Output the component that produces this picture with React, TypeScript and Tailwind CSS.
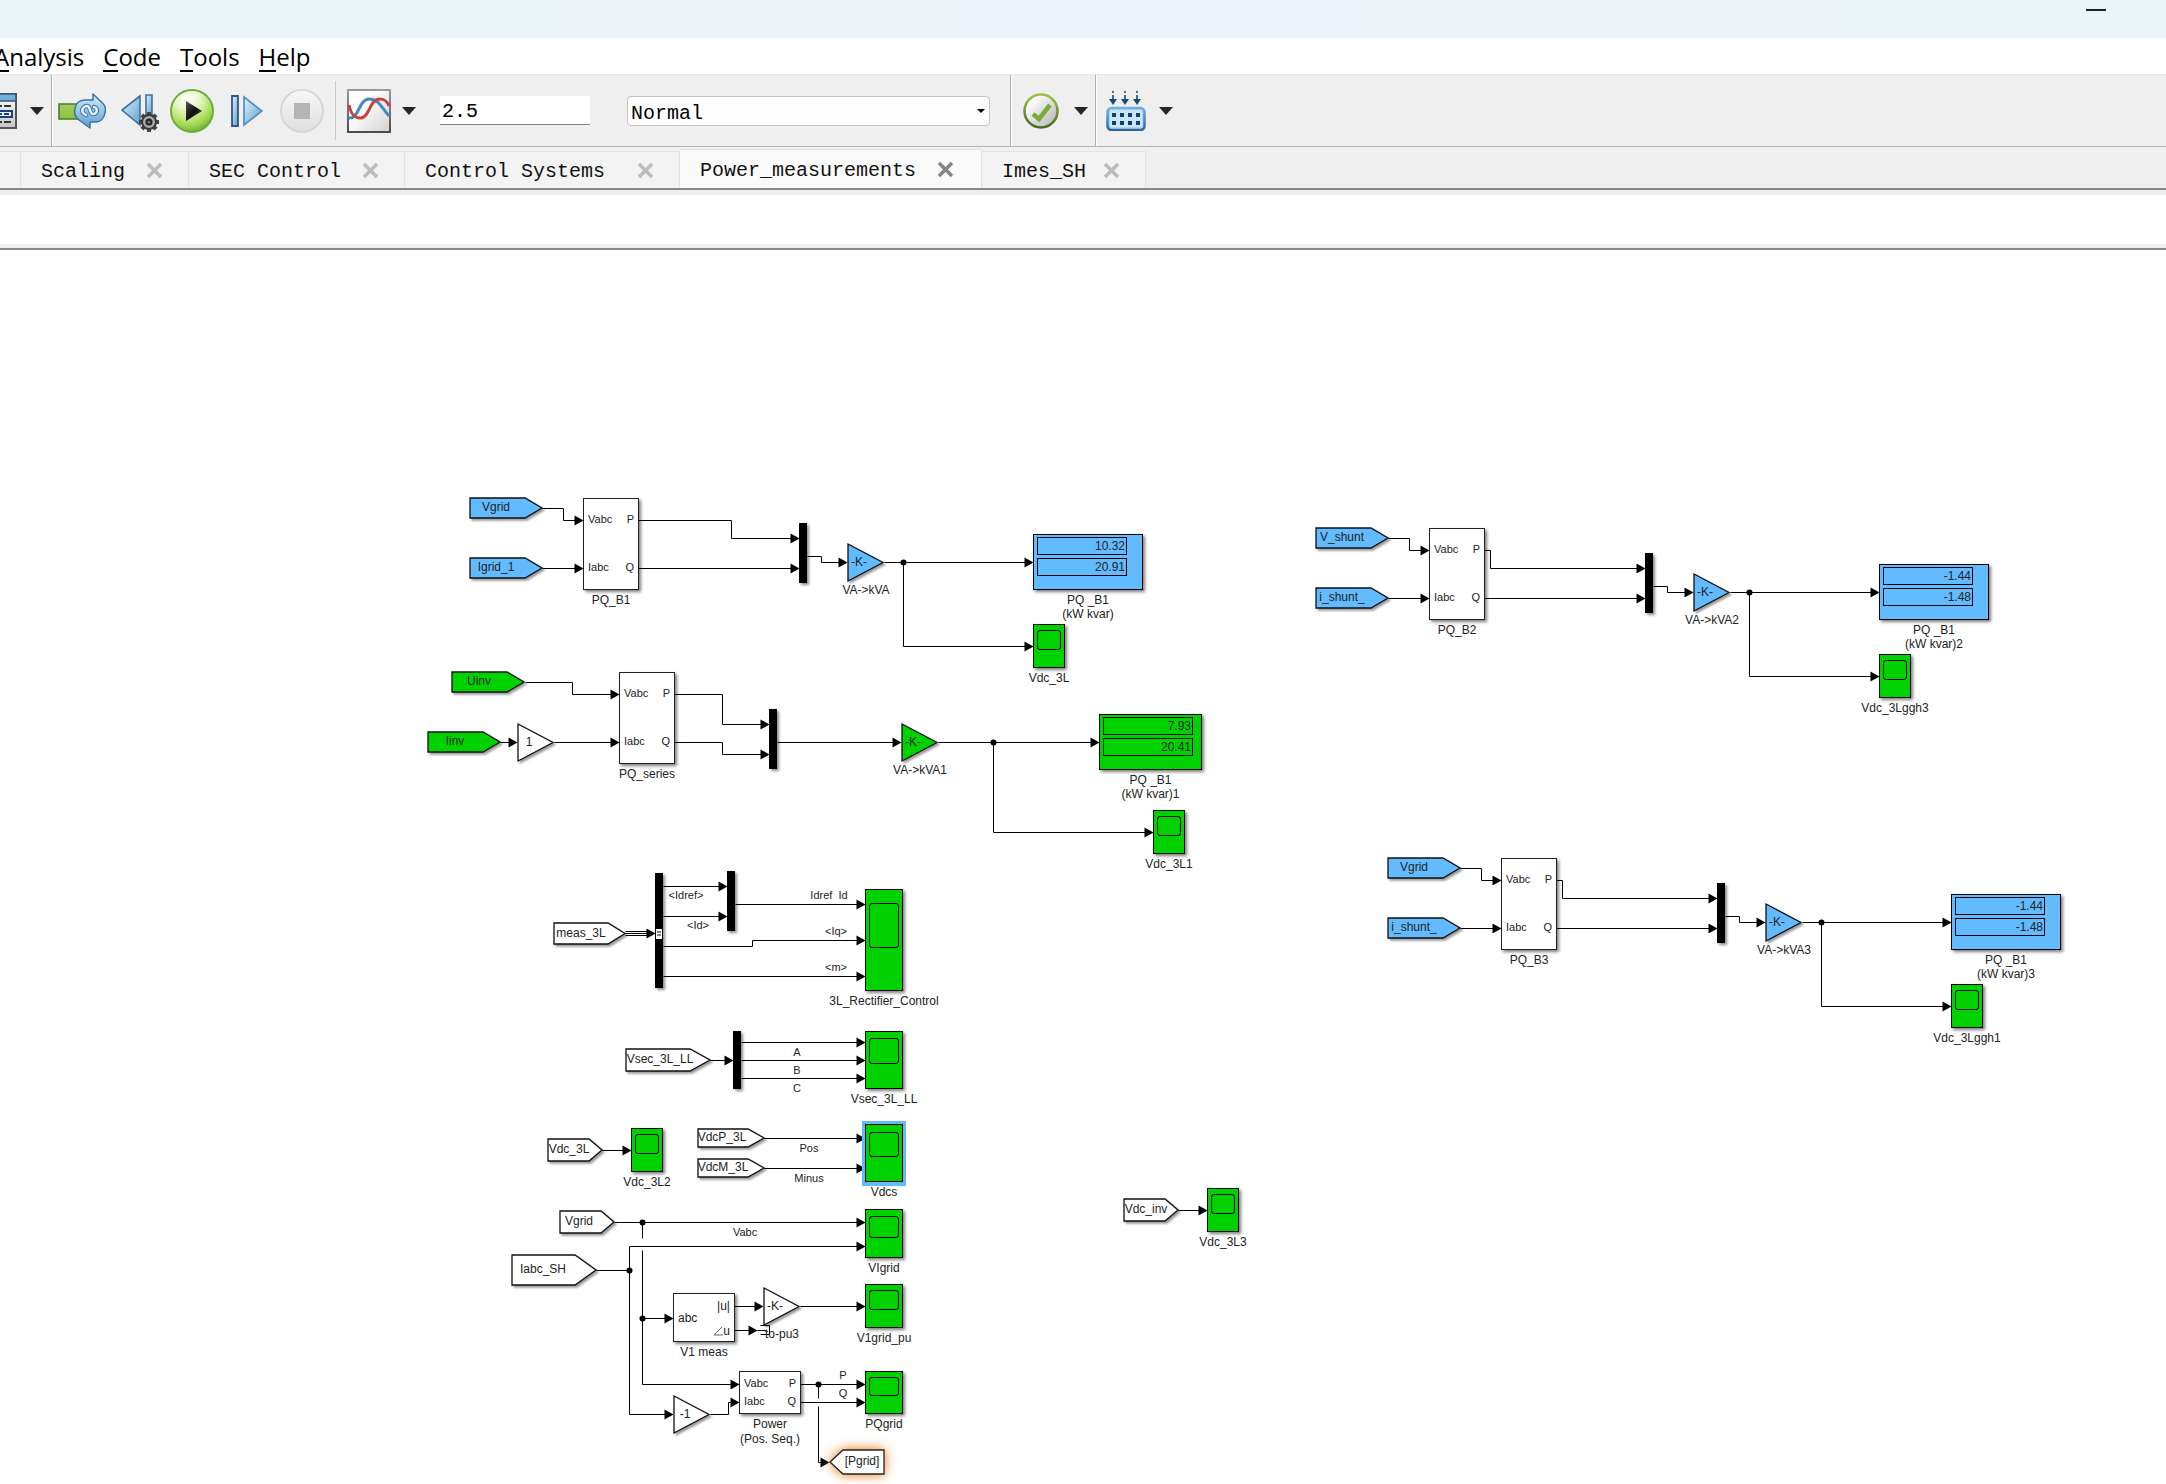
import React from "react";

/* ------------------------------------------------------------------ */
/* Diagram primitives. Coordinates are those of the model canvas.      */
/* ------------------------------------------------------------------ */

const CANVAS_TOP = 250;
const place = (x: number, y: number) => ({ left: x, top: y - CANVAS_TOP });

const BLUE = "#62bbff";
const GREEN = "#00d200";

type LabelProps = { x: number; y: number; children: React.ReactNode; small?: boolean };

function Label({ x, y, children, small }: LabelProps) {
  return (
    <div
      className={`absolute flex h-0 w-0 items-center justify-center whitespace-pre text-[#222] ${small ? "text-[11px]" : "text-[12px]"}`}
      style={place(x, y)}
    >
      <span>{children}</span>
    </div>
  );
}

type TagProps = {
  x: number;
  y: number;
  w: number;
  h: number;
  tip: number;
  text: string;
  tx: number;
  fill?: string;
};

function Tag({ x, y, w, h, tip, text, tx, fill = "#fff" }: TagProps) {
  return (
    <>
      <svg
        className="absolute overflow-visible drop-shadow-[2px_2px_1px_rgba(0,0,0,0.4)]"
        style={place(x, y)}
        width={w}
        height={h}
      >
        <path
          d={`M1 0H${w - tip}L${w} ${h / 2}L${w - tip} ${h}H1Z`}
          fill={fill}
          stroke="#111"
          strokeWidth="1.3"
        />
      </svg>
      <Label x={tx} y={y + h / 2 - 1}>
        {text}
      </Label>
    </>
  );
}

type GainProps = { x: number; y: number; text: string; fill?: string };

/* Triangle whose input side is at x and whose axis is at y. */
function Gain({ x, y, text, fill = "#fff" }: GainProps) {
  return (
    <>
      <svg
        className="absolute overflow-visible drop-shadow-[2px_2px_1px_rgba(0,0,0,0.4)]"
        style={place(x, y - 18)}
        width="37"
        height="37"
      >
        <path d="M1 0L36 18.5L1 37Z" fill={fill} stroke="#111" strokeWidth="1.3" />
      </svg>
      <Label x={x + 12} y={y}>
        {text}
      </Label>
    </>
  );
}

function Mux({ x, y, h }: { x: number; y: number; h: number }) {
  return (
    <div
      className="absolute w-2 bg-black shadow-[2px_2px_3px_rgba(0,0,0,0.45)]"
      style={{ ...place(x, y), height: h }}
    />
  );
}

type ScopeProps = {
  x: number;
  y: number;
  w?: number;
  h?: number;
  inset?: number;
  screen?: number;
  label: string;
  selected?: boolean;
};

function Scope({ x, y, w = 32, h = 44, inset = 5, screen = 20, label, selected }: ScopeProps) {
  return (
    <>
      <div
        className={`absolute flex justify-center border border-black bg-[#00d200] ${
          selected
            ? "shadow-[0_0_0_3px_#62bbff,0_1px_0_3px_#62bbff]"
            : "shadow-[2px_2px_3px_rgba(0,0,0,0.5)]"
        }`}
        style={{ ...place(x, y), width: w, height: h, paddingTop: inset }}
      >
        <div
          className="rounded-[3px] border border-black outline-1 -outline-offset-1 outline-black/40"
          style={{ width: w - 8, height: screen }}
        />
      </div>
      <Label x={x + w / 2} y={y + h + 10}>
        {label}
      </Label>
    </>
  );
}

type DisplayProps = { x: number; y: number; w: number; values: string[]; fill: string; suffix: string };

function Display({ x, y, w, values, fill, suffix }: DisplayProps) {
  return (
    <>
      <div
        className="absolute flex h-14 flex-col gap-[3px] border border-black pt-[2px] pl-[3px] shadow-[2px_2px_3px_rgba(0,0,0,0.5)]"
        style={{ ...place(x, y), width: w, background: fill }}
      >
        {values.map((v) => (
          <div
            key={v}
            className="flex h-[18px] w-[90px] items-center justify-end border border-black pr-px pb-px text-[12px] leading-none text-[#222]"
          >
            {v}
          </div>
        ))}
      </div>
      <Label x={x + w / 2} y={y + 66}>
        PQ _B1
      </Label>
      <Label x={x + w / 2} y={y + 80}>
        {`(kW kvar)${suffix}`}
      </Label>
    </>
  );
}

type BlockProps = {
  x: number;
  y: number;
  w: number;
  h: number;
  children?: React.ReactNode;
};

function Block({ x, y, w, h, children }: BlockProps) {
  return (
    <div
      className="absolute flex justify-between border border-[#222] bg-white px-1 text-[11px] leading-none text-[#222] shadow-[2px_2px_3px_rgba(0,0,0,0.5)]"
      style={{ ...place(x, y), width: w, height: h }}
    >
      {children}
    </div>
  );
}

function PQBlock({ x, y, label }: { x: number; y: number; label: string }) {
  return (
    <>
      <Block x={x} y={y} w={56} h={92}>
        <div className="flex flex-col justify-between pt-[15px] pb-4">
          <span>Vabc</span>
          <span>Iabc</span>
        </div>
        <div className="flex flex-col items-end justify-between pt-[15px] pb-4">
          <span>P</span>
          <span>Q</span>
        </div>
      </Block>
      <Label x={x + 28} y={y + 102}>
        {label}
      </Label>
    </>
  );
}

/* ------------------------------------------------------------------ */
/* Signals                                                             */
/* ------------------------------------------------------------------ */

type Wire = { d: string; to?: [number, number] };

function Wires({ wires, dots = [] }: { wires: Wire[]; dots?: [number, number][] }) {
  return (
    <>
      {wires.map((w) => (
        <g key={w.d}>
          <path d={w.d} fill="none" stroke="#000" strokeWidth="1" />
          {w.to && <path d={`M${w.to[0]} ${w.to[1]}l-9 -5v10z`} fill="#000" />}
        </g>
      ))}
      {dots.map(([x, y]) => (
        <circle key={`${x}-${y}`} cx={x} cy={y} r="3" fill="#000" />
      ))}
    </>
  );
}

const wires: Wire[] = [
  // inverter power
  { d: "M525 682H572V694H617", to: [619, 694] },
  { d: "M500 742H515", to: [517, 742] },
  { d: "M554 742H617", to: [619, 742] },
  { d: "M674 694H722V724H767", to: [769, 724] },
  { d: "M674 742H722V754H767", to: [769, 754] },
  { d: "M777 742H899", to: [901, 742] },
  { d: "M938 742H1097", to: [1099, 742] },
  { d: "M993 742V832H1151", to: [1153, 832] },
  // rectifier control
  { d: "M625 931H648M625 933H653M625 935H648", to: [655, 933] },
  { d: "M663 886H725", to: [727, 886] },
  { d: "M663 916H725", to: [727, 916] },
  { d: "M735 904H863", to: [865, 904] },
  { d: "M663 946H752V940H863", to: [865, 940] },
  { d: "M663 976H863", to: [865, 976] },
  // secondary voltages
  { d: "M710 1060H731", to: [733, 1060] },
  { d: "M741 1042H863", to: [865, 1042] },
  { d: "M741 1060H863", to: [865, 1060] },
  { d: "M741 1078H863", to: [865, 1078] },
  // dc link
  { d: "M602 1150H629", to: [631, 1150] },
  { d: "M764 1138H863", to: [865, 1138] },
  { d: "M764 1168H863", to: [865, 1168] },
  { d: "M1178 1210H1205", to: [1207, 1210] },
  // grid measurements
  { d: "M614 1222H863", to: [865, 1222] },
  { d: "M596 1270H629V1246H863", to: [865, 1246] },
  { d: "M629 1270V1414H671", to: [673, 1414] },
  { d: "M642 1222V1238" },
  { d: "M642 1250V1384H737", to: [739, 1384] },
  { d: "M642 1318H671", to: [673, 1318] },
  { d: "M734 1306H761", to: [763, 1306] },
  { d: "M734 1330H755", to: [757, 1330] },
  { d: "M757 1330H766M760 1325H769V1334H760" },
  { d: "M800 1306H863", to: [865, 1306] },
  { d: "M710 1414H728V1402H737", to: [739, 1402] },
  { d: "M800 1384H863", to: [865, 1384] },
  { d: "M800 1402H863", to: [865, 1402] },
  { d: "M818 1384V1398" },
  { d: "M818 1406V1462H827", to: [829, 1462] },
];

const dots: [number, number][] = [
  [993, 742],
  [642, 1222],
  [629, 1270],
  [642, 1318],
  [818, 1384],
];

type Chain = {
  dx: number;
  dy: number;
  inputs: [string, string];
  block: string;
  gain: string;
  values: string[];
  suffix: string;
  scope: string;
  bend: number;
};

const chains: Chain[] = [
  { dx: 0, dy: 0, inputs: ["Vgrid", "Igrid_1"], block: "PQ_B1", gain: "VA->kVA", values: ["10.32", "20.91"], suffix: "", scope: "Vdc_3L", bend: 731 },
  { dx: 846, dy: 30, inputs: ["V_shunt", "i_shunt_"], block: "PQ_B2", gain: "VA->kVA2", values: ["-1.44", "-1.48"], suffix: "2", scope: "Vdc_3Lggh3", bend: 644 },
  { dx: 918, dy: 360, inputs: ["Vgrid", "i_shunt_"], block: "PQ_B3", gain: "VA->kVA3", values: ["-1.44", "-1.48"], suffix: "3", scope: "Vdc_3Lggh1", bend: 644 },
];

function ChainWires({ dx, dy, bend }: Chain) {
  return (
    <g transform={`translate(${dx} ${dy})`}>
      <Wires
        wires={[
          { d: "M542 508H563V520H581", to: [583, 520] },
          { d: "M542 568H581", to: [583, 568] },
          { d: `M638 520H${bend}V538H797`, to: [799, 538] },
          { d: "M638 568H797", to: [799, 568] },
          { d: "M807 556H821V562H845", to: [847, 562] },
          { d: "M884 562H1031", to: [1033, 562] },
          { d: "M903 562V646H1031", to: [1033, 646] },
        ]}
        dots={[[903, 562]]}
      />
    </g>
  );
}

function ChainBlocks({ dx, dy, inputs, block, gain, values, suffix, scope }: Chain) {
  return (
    <>
      <Tag x={dx + 469} y={dy + 498} w={73} h={20} tip={17} text={inputs[0]} tx={dx + 496} fill={BLUE} />
      <Tag x={dx + 469} y={dy + 558} w={73} h={20} tip={17} text={inputs[1]} tx={dx + 496} fill={BLUE} />
      <PQBlock x={dx + 583} y={dy + 498} label={block} />
      <Mux x={dx + 799} y={dy + 523} h={60} />
      <Gain x={dx + 847} y={dy + 562} text="-K-" fill={BLUE} />
      <Label x={dx + 866} y={dy + 590}>
        {gain}
      </Label>
      <Display x={dx + 1033} y={dy + 534} w={110} values={values} fill={BLUE} suffix={suffix} />
      <Scope x={dx + 1033} y={dy + 624} label={scope} />
    </>
  );
}

function Canvas() {
  return (
    <main className="relative flex-1 overflow-hidden bg-white font-['Liberation_Sans',Arial,sans-serif] leading-none">
      <svg className="absolute inset-0 h-full w-full" aria-hidden="true">
        <g transform={`translate(0.5 ${0.5 - CANVAS_TOP})`}>
          <Wires wires={wires} dots={dots} />
          {chains.map((c) => (
            <ChainWires key={c.block} {...c} />
          ))}
        </g>
      </svg>

      {chains.map((c) => (
        <ChainBlocks key={c.block} {...c} />
      ))}

      <Tag x={451} y={672} w={73} h={20} tip={17} text="Uinv" tx={479} fill={GREEN} />
      <Tag x={427} y={732} w={73} h={20} tip={17} text="Iinv" tx={455} fill={GREEN} />
      <Gain x={517} y={742} text="1" />
      <PQBlock x={619} y={672} label="PQ_series" />
      <Mux x={769} y={709} h={60} />
      <Gain x={901} y={742} text="-K-" fill={GREEN} />
      <Label x={920} y={770}>VA-&gt;kVA1</Label>
      <Display x={1099} y={714} w={103} values={["7.93", "20.41"]} fill={GREEN} suffix="1" />
      <Scope x={1153} y={810} label="Vdc_3L1" />

      <Tag x={553} y={923} w={72} h={21} tip={17} text="meas_3L" tx={581} />
      <Mux x={655} y={873} h={115} />
      <svg className="absolute" style={place(656, 929)} width="6" height="10" aria-hidden="true">
        <path d="M0 0H6V10H0Z" fill="#fff" />
        <path d="M1 3H5M1 6H5" stroke="#000" strokeWidth="1" />
      </svg>
      <Mux x={727} y={871} h={60} />
      <Label x={686} y={895} small>&lt;Idref&gt;</Label>
      <Label x={698} y={925} small>&lt;Id&gt;</Label>
      <Label x={829} y={895} small>{"Idref  Id"}</Label>
      <Label x={836} y={931} small>&lt;Iq&gt;</Label>
      <Label x={836} y={967} small>&lt;m&gt;</Label>
      <Scope x={865} y={889} w={38} h={102} inset={13} screen={45} label="3L_Rectifier_Control" />

      <Tag x={625} y={1049} w={85} h={22} tip={20} text="Vsec_3L_LL" tx={660} />
      <Mux x={733} y={1031} h={58} />
      <Label x={797} y={1052} small>A</Label>
      <Label x={797} y={1070} small>B</Label>
      <Label x={797} y={1088} small>C</Label>
      <Scope x={865} y={1031} w={38} h={58} inset={6} screen={26} label="Vsec_3L_LL" />

      <Tag x={547} y={1139} w={55} h={22} tip={13} text="Vdc_3L" tx={569} />
      <Scope x={631} y={1128} label="Vdc_3L2" />
      <Tag x={697} y={1129} w={67} h={18} tip={16} text="VdcP_3L" tx={722} />
      <Tag x={697} y={1159} w={67} h={18} tip={16} text="VdcM_3L" tx={723} />
      <Label x={809} y={1148} small>Pos</Label>
      <Label x={809} y={1178} small>Minus</Label>
      <Scope x={865} y={1124} w={38} h={58} inset={7} screen={25} label="Vdcs" selected />

      <Tag x={1123} y={1199} w={55} h={22} tip={13} text="Vdc_inv" tx={1146} />
      <Scope x={1207} y={1188} label="Vdc_3L3" />

      <Tag x={559} y={1211} w={55} h={22} tip={13} text="Vgrid" tx={579} />
      <Label x={745} y={1232} small>Vabc</Label>
      <Scope x={865} y={1209} w={38} h={49} inset={6} screen={22} label="VIgrid" />

      <Tag x={511} y={1255} w={85} h={30} tip={21} text="Iabc_SH" tx={543} />
      <Block x={673} y={1293} w={62} h={49}>
        <span className="self-center text-[12px]">abc</span>
        <span className="flex flex-col items-end justify-between pt-[6px] pb-1 text-[12px]">
          <span>|u|</span>
          <span className="flex items-end">
            <svg className="h-[11px] w-[10px]" viewBox="0 0 10 11" aria-hidden="true">
              <path d="M9 1L1 9H10" fill="none" stroke="#666" strokeWidth="1" />
            </svg>
            u
          </span>
        </span>
      </Block>
      <Label x={704} y={1352}>V1 meas</Label>
      <Gain x={763} y={1306} text="-K-" />
      <Label x={782} y={1334}>to-pu3</Label>
      <Scope x={865} y={1284} w={38} h={44} inset={5} screen={20} label="V1grid_pu" />

      <Gain x={673} y={1414} text="-1" />
      <Block x={739} y={1371} w={62} h={43}>
        <span className="flex flex-col justify-between py-[6px]">
          <span>Vabc</span>
          <span>Iabc</span>
        </span>
        <span className="flex flex-col items-end justify-between py-[6px]">
          <span>P</span>
          <span>Q</span>
        </span>
      </Block>
      <Label x={770} y={1424}>Power</Label>
      <Label x={770} y={1439}>(Pos. Seq.)</Label>
      <Label x={843} y={1375} small>P</Label>
      <Label x={843} y={1393} small>Q</Label>
      <Scope x={865} y={1371} w={38} h={43} inset={5} screen={19} label="PQgrid" />

      <svg
        className="absolute overflow-visible drop-shadow-[0_0_6px_#e8750a]"
        style={place(830, 1450)}
        width="55"
        height="25"
      >
        <path d="M0 12L13 0H54V24H13Z" fill="#fff" stroke="#222" strokeWidth="1.3" />
      </svg>
      <Label x={862} y={1461}>[Pgrid]</Label>
    </main>
  );
}

/* ------------------------------------------------------------------ */
/* Toolbar icons                                                       */
/* ------------------------------------------------------------------ */

function Caret() {
  return (
    <svg className="h-2 w-[14px]" viewBox="0 0 14 8" aria-hidden="true">
      <path d="M0 0H14L7 8Z" fill="#262626" />
    </svg>
  );
}

function ExplorerIcon() {
  return (
    <svg className="h-9 w-[17px]" viewBox="0 0 17 36" aria-hidden="true">
      <defs>
        <linearGradient id="exBody" x1="0" y1="0" x2="0" y2="1">
          <stop offset="0" stopColor="#fff" />
          <stop offset="1" stopColor="#c4c4c4" />
        </linearGradient>
      </defs>
      <path d="M-8 1H16V35H-8Z" fill="url(#exBody)" stroke="#555" strokeWidth="2" />
      <path d="M-8 1H16V8H-8Z" fill="#6fb0dc" stroke="#35577c" strokeWidth="1.6" />
      <path d="M-2 13H2M4 13H11M-2 29H2M4 29H11" stroke="#333" strokeWidth="2" />
      <path d="M-2 18H12V24H-2Z" fill="#e8f2fb" stroke="#1d3f77" strokeWidth="2" />
      <path d="M-1 21H2M4 21H9" stroke="#1d3f77" strokeWidth="2" />
    </svg>
  );
}

function FastRestartIcon() {
  return (
    <svg className="h-9 w-12" viewBox="0 0 48 36" aria-hidden="true">
      <defs>
        <linearGradient id="frGreen" x1="0" y1="0" x2="0" y2="1">
          <stop offset="0" stopColor="#a6cf5c" />
          <stop offset="1" stopColor="#8ac43f" />
        </linearGradient>
        <linearGradient id="frBlue" x1="0" y1="0" x2="0" y2="1">
          <stop offset="0" stopColor="#d3ebfa" />
          <stop offset="1" stopColor="#5f9fd2" />
        </linearGradient>
      </defs>
      <path d="M1 11H20V26H1Z" fill="url(#frGreen)" stroke="#4c7a2b" strokeWidth="1.6" />
      <path
        d="M35 1L44 9.500C47 12 48 16 47 20C46 26 42 29 38 29H32V35L21 27C17 24 16 19 17 15C18 10 22 7 27 7H35Z"
        fill="url(#frBlue)"
        stroke="#41719f"
        strokeWidth="1.5"
        strokeLinejoin="round"
      />
      <path
        d="M25 20C23 16 26 13 29 13C33 13 31 21 35 21C38 21 40 18 38 15M25 20L28 22M38 15L36 14"
        fill="none"
        stroke="#41719f"
        strokeWidth="4.5"
        strokeLinecap="round"
      />
      <path
        d="M25 20C23 16 26 13 29 13C33 13 31 21 35 21C38 21 40 18 38 15M25 20L28 22M38 15L36 14"
        fill="none"
        stroke="#e4f3fd"
        strokeWidth="2.5"
        strokeLinecap="round"
      />
    </svg>
  );
}

function StepBackIcon() {
  const teeth = [0, 45, 90, 135, 180, 225, 270, 315];
  return (
    <svg className="h-10 w-[38px]" viewBox="0 0 38 40" aria-hidden="true">
      <defs>
        <linearGradient id="stepBlue" x1="0" y1="0" x2="1" y2="1">
          <stop offset="0" stopColor="#dff3fd" />
          <stop offset="1" stopColor="#5d9fd0" />
        </linearGradient>
      </defs>
      <path d="M19 3V32L1 17Z" fill="url(#stepBlue)" stroke="#44709c" strokeWidth="1.6" />
      <path d="M25 2H31V22H25Z" fill="url(#stepBlue)" stroke="#44709c" strokeWidth="1.6" />
      <g transform="translate(28 29)">
        {teeth.map((a) => (
          <path key={a} d="M-2 -10H2V-6H-2Z" transform={`rotate(${a})`} fill="#444" />
        ))}
        <circle r="7" fill="#aaa" stroke="#3a3a3a" strokeWidth="2" />
        <circle r="3.5" fill="#222" />
        <circle cx="0" cy="0" r="1.5" fill="#777" />
      </g>
    </svg>
  );
}

function RunIcon() {
  return (
    <svg className="h-11 w-11" viewBox="0 0 44 44" aria-hidden="true">
      <defs>
        <radialGradient id="runFill" cx="0.4" cy="0.2" r="0.85">
          <stop offset="0" stopColor="#ffffff" />
          <stop offset="0.35" stopColor="#e6f6c4" />
          <stop offset="0.75" stopColor="#a3d84c" />
          <stop offset="1" stopColor="#5fa636" />
        </radialGradient>
        <linearGradient id="runArrow" x1="0" y1="0" x2="1" y2="1">
          <stop offset="0" stopColor="#555" />
          <stop offset="0.5" stopColor="#111" />
          <stop offset="1" stopColor="#444" />
        </linearGradient>
      </defs>
      <circle cx="22" cy="22" r="21" fill="url(#runFill)" stroke="#6cae3e" strokeWidth="2" />
      <path d="M16 12L32 22L16 32Z" fill="url(#runArrow)" />
    </svg>
  );
}

function StepForwardIcon() {
  return (
    <svg className="h-8 w-8" viewBox="0 0 32 32" aria-hidden="true">
      <path d="M1 1H7V31H1Z" fill="url(#stepBlue)" stroke="#2f5680" strokeWidth="1.8" />
      <path d="M13 2L31 16L13 30Z" fill="url(#stepBlue)" stroke="#5b8fbc" strokeWidth="1.8" />
    </svg>
  );
}

function StopIcon() {
  return (
    <svg className="h-11 w-11" viewBox="0 0 44 44" aria-hidden="true">
      <defs>
        <linearGradient id="stopFill" x1="0" y1="0" x2="0" y2="1">
          <stop offset="0" stopColor="#f8f8f8" />
          <stop offset="1" stopColor="#dedede" />
        </linearGradient>
      </defs>
      <circle cx="22" cy="22" r="21" fill="url(#stopFill)" stroke="#d2d2d2" strokeWidth="1.5" />
      <path d="M14 14H30V30H14Z" fill="#b4b4b4" />
    </svg>
  );
}

function PlotIcon() {
  return (
    <svg className="h-11 w-11" viewBox="0 0 44 44" aria-hidden="true">
      <defs>
        <linearGradient id="plotBg" x1="0.3" y1="0.4" x2="1" y2="1">
          <stop offset="0" stopColor="#fff" />
          <stop offset="1" stopColor="#d2d2d2" />
        </linearGradient>
        <linearGradient id="plotEdge" x1="0" y1="0" x2="0" y2="1">
          <stop offset="0" stopColor="#9a9a9a" />
          <stop offset="1" stopColor="#4c4c4c" />
        </linearGradient>
      </defs>
      <path d="M1 1H43V43H1Z" fill="url(#plotBg)" stroke="url(#plotEdge)" strokeWidth="2" />
      <path d="M2 29C12 30 12 10 22 10C32 10 34 18 42 27" fill="none" stroke="#4488c4" strokeWidth="3" />
      <path d="M2 16C4 25 7 29 13 29C23 29 22 10 33 10C38 10 41 14 42 17" fill="none" stroke="#c8423f" strokeWidth="3" />
    </svg>
  );
}

function CheckIcon() {
  return (
    <svg className="h-9 w-9" viewBox="0 0 36 36" aria-hidden="true">
      <defs>
        <linearGradient id="ckBg" x1="0.2" y1="0.2" x2="0.9" y2="0.9">
          <stop offset="0" stopColor="#fff" />
          <stop offset="1" stopColor="#b9b9b9" />
        </linearGradient>
        <linearGradient id="ckEdge" x1="0" y1="0" x2="0" y2="1">
          <stop offset="0" stopColor="#98c343" />
          <stop offset="1" stopColor="#4b6a26" />
        </linearGradient>
      </defs>
      <circle cx="18" cy="18" r="16.5" fill="url(#ckBg)" stroke="url(#ckEdge)" strokeWidth="2.5" />
      <path d="M10 21L16 26L27 12" fill="none" stroke="#7aac35" strokeWidth="4.5" />
    </svg>
  );
}

function BuildIcon() {
  return (
    <svg className="h-[41px] w-10" viewBox="0 0 40 41" aria-hidden="true">
      <defs>
        <linearGradient id="bdEdge" x1="0" y1="0" x2="0" y2="1">
          <stop offset="0" stopColor="#74aedd" />
          <stop offset="1" stopColor="#2f6397" />
        </linearGradient>
      </defs>
      {[7, 19, 31].map((x) => (
        <g key={x}>
          <path d={`M${x - 1} 1h2v2h-2zM${x - 1} 5h2v5h-2z`} fill="#3a6d9c" />
          <path d={`M${x - 4} 9h8l-4 6z`} fill="#144a7c" />
        </g>
      ))}
      <rect x="1.5" y="18" width="37" height="22" rx="4" fill="#a9d4f5" stroke="url(#bdEdge)" strokeWidth="2.5" />
      <rect x="4" y="20" width="32" height="17" rx="2" fill="#c9e6fb" />
      {[25, 33].map((y) =>
        [8, 16, 24, 32].map((x) => (
          <rect key={`${x}-${y}`} x={x - 2} y={y - 2} width="4" height="4" fill="#123f6e" />
        )),
      )}
    </svg>
  );
}

/* ------------------------------------------------------------------ */
/* Window chrome                                                       */
/* ------------------------------------------------------------------ */

const menus = ["Analysis", "Code", "Tools", "Help"];

function MenuBar() {
  return (
    <nav className="-ml-[6px] flex h-9 items-center gap-[19px] bg-white pt-[2px] font-['Open_Sans','Noto_Sans',sans-serif] text-[24px] text-black">
      {menus.map((m) => (
        <button key={m} type="button" className="leading-8">
          <span className="inline-block border-b-2 border-black leading-[26px]">{m[0]}</span>
          {m.slice(1)}
        </button>
      ))}
    </nav>
  );
}

function Toolbar() {
  return (
    <div className="flex h-[73px] items-stretch border-t border-b border-t-[#e8e8e8] border-b-[#b4b6b6] bg-[#efefef]">
      <div className="flex items-center border-r border-[#b0b0b0] pr-[7px]">
        <button type="button" aria-label="Model explorer"><ExplorerIcon /></button>
        <button type="button" aria-label="Explorer options" className="ml-[13px]"><Caret /></button>
      </div>
      <div className="flex items-center border-l border-white pr-[11px] pl-[5px]">
        <button type="button" aria-label="Fast restart"><FastRestartIcon /></button>
        <button type="button" aria-label="Step back" className="ml-[15px] pt-1"><StepBackIcon /></button>
        <button type="button" aria-label="Run" className="ml-[11px]"><RunIcon /></button>
        <button type="button" aria-label="Step forward" className="ml-[17px]"><StepForwardIcon /></button>
        <button type="button" aria-label="Stop" disabled className="ml-[17px]"><StopIcon /></button>
      </div>
      <div className="my-[6px] w-px bg-[#c8c8c8]" />
      <div className="flex items-center border-r border-[#b0b0b0] pr-5 pl-[11px] font-['Liberation_Mono',monospace] text-[20px] text-black">
        <button type="button" aria-label="Simulation data"><PlotIcon /></button>
        <button type="button" aria-label="Simulation data options" className="ml-[11px]"><Caret /></button>
        <input
          aria-label="Stop time"
          defaultValue="2.5"
          className="ml-6 h-[29px] w-[150px] border-b border-[#808080] bg-white pt-1 pl-[2px] outline-none"
        />
        <div className="relative ml-[37px]">
          <select
            aria-label="Simulation mode"
            defaultValue="Normal"
            className="block h-[30px] w-[363px] appearance-none rounded-[4px] border border-[#c6c6c6] bg-[#fdfdfd] pt-[2px] pl-[3px] outline-none"
          >
            <option>Normal</option>
          </select>
          <svg className="pointer-events-none absolute top-[13px] right-[5px] h-1 w-2" viewBox="0 0 8 4" aria-hidden="true">
            <path d="M0 0H8L4 4Z" fill="#000" />
          </svg>
        </div>
      </div>
      <div className="flex items-center border-r border-l border-r-[#b0b0b0] border-l-white pr-[7px] pl-[11px]">
        <button type="button" aria-label="Check model"><CheckIcon /></button>
        <button type="button" aria-label="Check options" className="ml-[15px]"><Caret /></button>
      </div>
      <div className="flex items-center border-l border-white pl-[9px]">
        <button type="button" aria-label="Build"><BuildIcon /></button>
        <button type="button" aria-label="Build options" className="ml-[13px]"><Caret /></button>
      </div>
    </div>
  );
}

function CloseIcon({ dark }: { dark?: boolean }) {
  return (
    <svg className="h-[17px] w-[17px]" viewBox="0 0 17 17" aria-hidden="true">
      <path d="M2 2L15 15M15 2L2 15" stroke={dark ? "#858585" : "#bcbcbc"} strokeWidth="3.5" />
    </svg>
  );
}

const tabs = [
  { title: "Scaling", width: "w-[168px]" },
  { title: "SEC Control", width: "w-[216px]" },
  { title: "Control Systems", width: "w-[275px]" },
  { title: "Power_measurements", width: "w-[302px]", active: true },
  { title: "Imes_SH", width: "w-[164px]" },
];

function TabBar() {
  return (
    <div className="flex h-[43px] items-end border-b-2 border-[#84888d] bg-[#efefef] pt-[2px] font-['Liberation_Mono',monospace] text-[20px] text-[#111]">
      <div className="h-[37px] w-[21px] border-t border-r border-[#e2e2e2] bg-[#f3f3f3]" />
      {tabs.map((t) => (
        <div
          key={t.title}
          className={`flex items-center justify-between border-t border-r border-[#e2e2e2] pl-5 ${t.width} ${
            t.active ? "h-[39px] bg-[#fafafa] pr-[27px]" : "h-[37px] bg-[#f3f3f3] pr-[25px]"
          }`}
        >
          <button type="button" className="pt-1">{t.title}</button>
          <button type="button" aria-label={`Close ${t.title}`}>
            <CloseIcon dark={t.active} />
          </button>
        </div>
      ))}
    </div>
  );
}

export default function App() {
  return (
    <div className="flex min-h-screen flex-col overflow-hidden bg-white">
      <header className="flex h-[38px] items-start justify-end bg-linear-to-r from-[#ebf5f7] via-[#ecf3fa] to-[#ebf4f9] pr-[60px]">
        <button type="button" aria-label="Minimize" className="pt-[9px]">
          <span className="block h-[2px] w-5 bg-[#222]" />
        </button>
      </header>
      <MenuBar />
      <Toolbar />
      <TabBar />
      <div className="h-[58px] border-t-[5px] border-b-[4px] border-[#efefef] bg-white" />
      <div className="h-[2px] bg-[#868a92]" />
      <Canvas />
    </div>
  );
}
